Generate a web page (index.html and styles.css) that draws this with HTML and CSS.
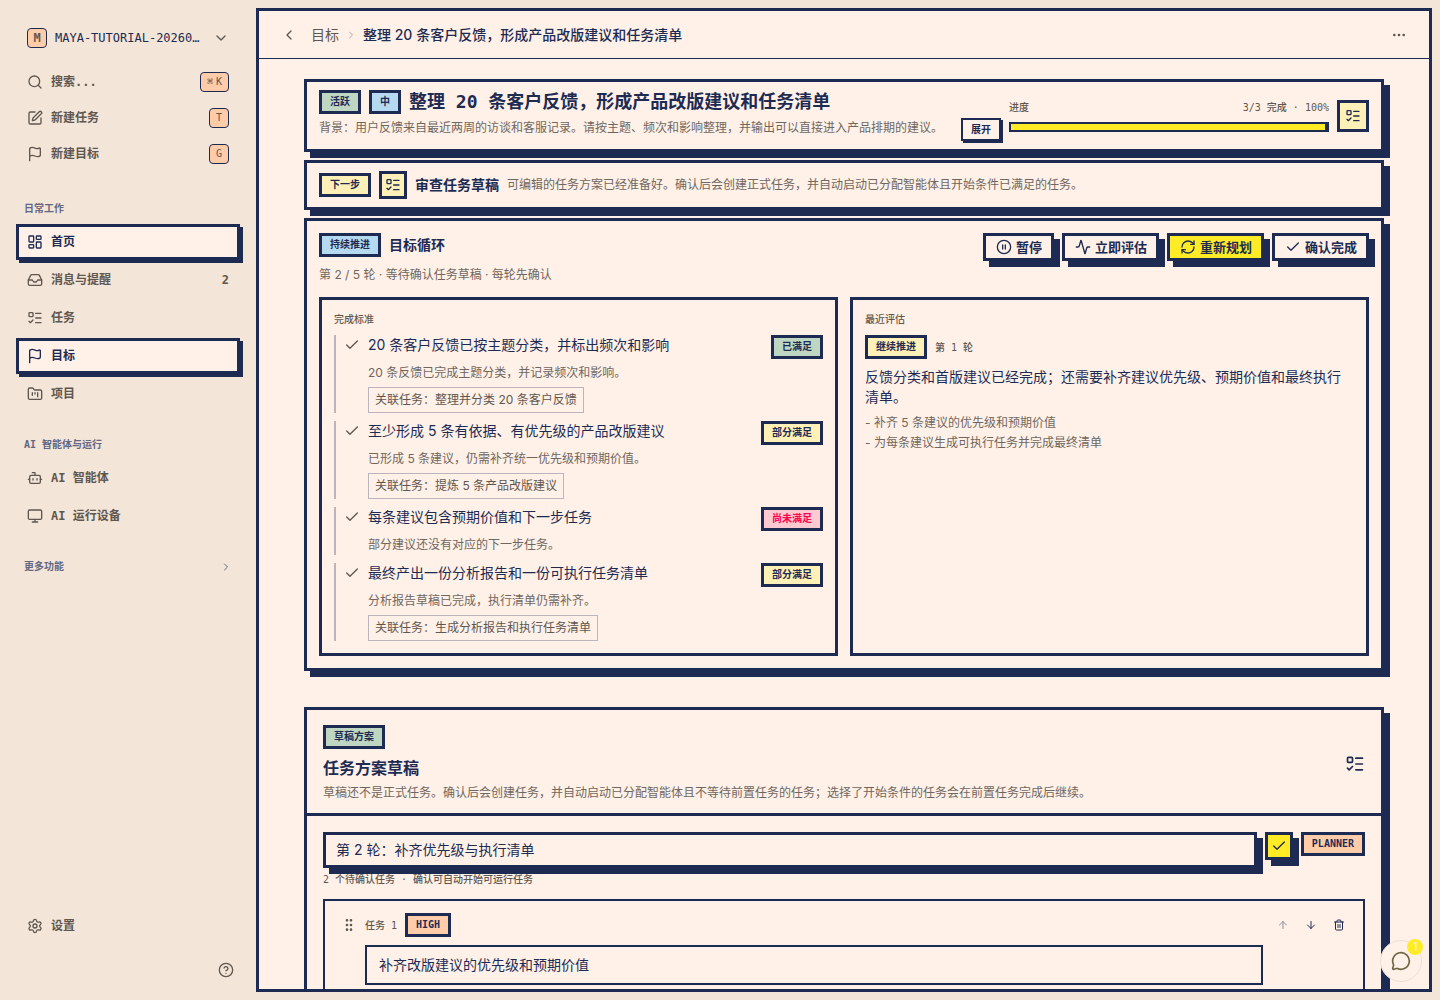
FILE: index.html
```html
<!DOCTYPE html>
<html lang="zh-CN">
<head>
<meta charset="utf-8">
<meta name="viewport" content="width=device-width, initial-scale=1">
<title>目标</title>
<link rel="stylesheet" href="styles.css">
</head>
<body>
<svg class="sprite" aria-hidden="true">
  <symbol id="chevron-down" viewBox="0 0 24 24"><path d="m6 9 6 6 6-6"/></symbol>
  <symbol id="chevron-right" viewBox="0 0 24 24"><path d="m9 18 6-6-6-6"/></symbol>
  <symbol id="chevron-left" viewBox="0 0 24 24"><path d="m15 18-6-6 6-6"/></symbol>
  <symbol id="search" viewBox="0 0 24 24"><circle cx="11" cy="11" r="8"/><path d="m21 21-4.34-4.34"/></symbol>
  <symbol id="pen" viewBox="0 0 24 24"><path d="M12 3H5a2 2 0 0 0-2 2v14a2 2 0 0 0 2 2h14a2 2 0 0 0 2-2v-7"/><path d="M18.375 2.625a1 1 0 0 1 3 3l-9.013 9.014a2 2 0 0 1-.853.505l-2.873.84a.5.5 0 0 1-.62-.62l.84-2.873a2 2 0 0 1 .506-.852z"/></symbol>
  <symbol id="flag" viewBox="0 0 24 24"><path d="M4 22V4a1 1 0 0 1 .4-.8A6 6 0 0 1 8 2c3 0 5 2 7.333 2q2 0 3.067-.8A1 1 0 0 1 20 4v10a1 1 0 0 1-.4.8A6 6 0 0 1 16 16c-3 0-5-2-8-2a6 6 0 0 0-4 1.528"/></symbol>
  <symbol id="dashboard" viewBox="0 0 24 24"><rect x="3" y="3" width="7" height="9" rx="1"/><rect x="14" y="3" width="7" height="5" rx="1"/><rect x="14" y="12" width="7" height="9" rx="1"/><rect x="3" y="16" width="7" height="5" rx="1"/></symbol>
  <symbol id="inbox" viewBox="0 0 24 24"><path d="M22 12h-6l-2 3h-4l-2-3H2"/><path d="M5.45 5.11 2 12v6a2 2 0 0 0 2 2h16a2 2 0 0 0 2-2v-6l-3.45-6.89A2 2 0 0 0 16.76 4H7.24a2 2 0 0 0-1.79 1.11z"/></symbol>
  <symbol id="todo" viewBox="0 0 24 24"><rect x="3" y="4" width="6" height="6" rx="1"/><path d="m3 17 2 2 4-4M13 5h8M13 12h8M13 19h8"/></symbol>
  <symbol id="kanban" viewBox="0 0 24 24"><path d="M4 20h16a2 2 0 0 0 2-2V8a2 2 0 0 0-2-2h-7.93a2 2 0 0 1-1.66-.9l-.82-1.2A2 2 0 0 0 7.93 3H4a2 2 0 0 0-2 2v13c0 1.1.9 2 2 2Z"/><path d="M8 10v4M12 10v2M16 10v6"/></symbol>
  <symbol id="bot" viewBox="0 0 24 24"><path d="M12 8V4H8"/><rect x="4" y="8" width="16" height="12" rx="2"/><path d="M2 14h2M20 14h2M15 13v2M9 13v2"/></symbol>
  <symbol id="monitor" viewBox="0 0 24 24"><rect x="2" y="3" width="20" height="14" rx="2"/><path d="M8 21h8M12 17v4"/></symbol>
  <symbol id="gear" viewBox="0 0 24 24"><path d="M9.671 4.136a2.34 2.34 0 0 1 4.659 0 2.34 2.34 0 0 0 3.319 1.915 2.34 2.34 0 0 1 2.33 4.033 2.34 2.34 0 0 0 0 3.831 2.34 2.34 0 0 1-2.33 4.033 2.34 2.34 0 0 0-3.319 1.915 2.34 2.34 0 0 1-4.659 0 2.34 2.34 0 0 0-3.32-1.915 2.34 2.34 0 0 1-2.33-4.033 2.34 2.34 0 0 0 0-3.831A2.34 2.34 0 0 1 6.35 6.051a2.34 2.34 0 0 0 3.319-1.915"/><circle cx="12" cy="12" r="3"/></symbol>
  <symbol id="help" viewBox="0 0 24 24"><circle cx="12" cy="12" r="10"/><path d="M9.09 9a3 3 0 0 1 5.83 1c0 2-3 3-3 3M12 17h.01"/></symbol>
  <symbol id="more" viewBox="0 0 24 24"><circle cx="12" cy="12" r="1"/><circle cx="19" cy="12" r="1"/><circle cx="5" cy="12" r="1"/></symbol>
  <symbol id="pause" viewBox="0 0 24 24"><circle cx="12" cy="12" r="10"/><path d="M10 15V9M14 15V9"/></symbol>
  <symbol id="activity" viewBox="0 0 24 24"><path d="M22 12h-2.48a2 2 0 0 0-1.93 1.46l-2.35 8.36a.25.25 0 0 1-.48 0L9.24 2.18a.25.25 0 0 0-.48 0l-2.35 8.36A2 2 0 0 1 4.49 12H2"/></symbol>
  <symbol id="refresh" viewBox="0 0 24 24"><path d="M3 12a9 9 0 0 1 9-9 9.75 9.75 0 0 1 6.74 2.74L21 8"/><path d="M21 3v5h-5M21 12a9 9 0 0 1-9 9 9.75 9.75 0 0 1-6.74-2.74L3 16"/><path d="M8 16H3v5"/></symbol>
  <symbol id="check" viewBox="0 0 24 24"><path d="M20 6 9 17l-5-5"/></symbol>
  <symbol id="grip" viewBox="0 0 24 24"><circle cx="9" cy="12" r="1"/><circle cx="9" cy="5" r="1"/><circle cx="9" cy="19" r="1"/><circle cx="15" cy="12" r="1"/><circle cx="15" cy="5" r="1"/><circle cx="15" cy="19" r="1"/></symbol>
  <symbol id="up" viewBox="0 0 24 24"><path d="m5 12 7-7 7 7M12 19V5"/></symbol>
  <symbol id="down" viewBox="0 0 24 24"><path d="M12 5v14M19 12l-7 7-7-7"/></symbol>
  <symbol id="trash" viewBox="0 0 24 24"><path d="M10 11v6M14 11v6M19 6v14a2 2 0 0 1-2 2H7a2 2 0 0 1-2-2V6M3 6h18M8 6V4a2 2 0 0 1 2-2h4a2 2 0 0 1 2 2v2"/></symbol>
  <symbol id="chat" viewBox="0 0 24 24"><path d="M2.992 16.342a2 2 0 0 1 .094 1.167l-1.065 3.29a1 1 0 0 0 1.236 1.168l3.413-.998a2 2 0 0 1 1.099.092 10 10 0 1 0-4.777-4.719"/></symbol>
</svg>

<div class="app">
  <aside class="sidebar">
    <button class="workspace" type="button">
      <span class="avatar">M</span>
      <span class="workspace-name">MAYA-TUTORIAL-20260…</span>
      <svg class="icon"><use href="#chevron-down"/></svg>
    </button>
    <div class="quick">
      <button class="item" type="button"><svg class="icon"><use href="#search"/></svg><span class="item-label">搜索...</span><kbd><span>⌘</span><span>K</span></kbd></button>
      <button class="item" type="button"><svg class="icon"><use href="#pen"/></svg><span class="item-label">新建任务</span><kbd>T</kbd></button>
      <button class="item" type="button"><svg class="icon"><use href="#flag"/></svg><span class="item-label">新建目标</span><kbd>G</kbd></button>
    </div>
    <nav class="nav">
      <section class="group">
        <h2 class="group-title">日常工作</h2>
        <a class="item active" href="#"><svg class="icon"><use href="#dashboard"/></svg><span class="item-label">首页</span></a>
        <a class="item" href="#"><svg class="icon"><use href="#inbox"/></svg><span class="item-label">消息与提醒</span><span>2</span></a>
        <a class="item" href="#"><svg class="icon"><use href="#todo"/></svg><span class="item-label">任务</span></a>
        <a class="item active" href="#"><svg class="icon"><use href="#flag"/></svg><span class="item-label">目标</span></a>
        <a class="item" href="#"><svg class="icon"><use href="#kanban"/></svg><span class="item-label">项目</span></a>
      </section>
      <section class="group">
        <h2 class="group-title">AI 智能体与运行</h2>
        <a class="item" href="#"><svg class="icon"><use href="#bot"/></svg><span class="item-label">AI 智能体</span></a>
        <a class="item" href="#"><svg class="icon"><use href="#monitor"/></svg><span class="item-label">AI 运行设备</span></a>
      </section>
      <button class="group-title more-toggle" type="button">更多功能<svg class="icon icon-12"><use href="#chevron-right"/></svg></button>
    </nav>
    <a class="item" href="#"><svg class="icon"><use href="#gear"/></svg><span class="item-label">设置</span></a>
    <button class="icon-button help" type="button" aria-label="帮助"><svg class="icon"><use href="#help"/></svg></button>
  </aside>

  <main class="main">
    <header class="topbar">
      <button class="icon-button" type="button" aria-label="返回"><svg class="icon"><use href="#chevron-left"/></svg></button>
      <nav class="crumbs">
        <a href="#">目标</a>
        <svg class="icon icon-12"><use href="#chevron-right"/></svg>
        <span class="crumb-current">整理 20 条客户反馈，形成产品改版建议和任务清单</span>
      </nav>
      <button class="icon-button" type="button" aria-label="更多"><svg class="icon"><use href="#more"/></svg></button>
    </header>

    <div class="scroll">
      <div class="page">
        <section class="card summary">
          <div class="summary-text">
            <div class="row">
              <span class="badge green">活跃</span>
              <span class="badge blue">中</span>
              <h1 class="page-title">整理 20 条客户反馈，形成产品改版建议和任务清单</h1>
            </div>
            <div class="summary-desc">
              <p class="note">背景：用户反馈来自最近两周的访谈和客服记录。请按主题、频次和影响整理，并输出可以直接进入产品排期的建议。</p>
              <button class="expand" type="button">展开</button>
            </div>
          </div>
          <div class="progress">
            <div class="progress-head"><span>进度</span><span>3/3 完成 · 100%</span></div>
            <div class="bar"><div class="bar-fill" style="width:100%"></div></div>
          </div>
          <span class="icon-box icon-box-32"><svg class="icon"><use href="#todo"/></svg></span>
        </section>

        <section class="card next row">
          <span class="badge yellow">下一步</span>
          <span class="icon-box"><svg class="icon"><use href="#todo"/></svg></span>
          <h2 class="card-title">审查任务草稿</h2>
          <p class="note">可编辑的任务方案已经准备好。确认后会创建正式任务，并自动启动已分配智能体且开始条件已满足的任务。</p>
        </section>

        <section class="card loop">
          <div class="loop-head">
            <div class="row">
              <span class="badge blue">持续推进</span>
              <h2 class="card-title">目标循环</h2>
            </div>
            <div class="row">
              <button class="action" type="button"><svg class="icon"><use href="#pause"/></svg>暂停</button>
              <button class="action" type="button"><svg class="icon"><use href="#activity"/></svg>立即评估</button>
              <button class="action primary" type="button"><svg class="icon"><use href="#refresh"/></svg>重新规划</button>
              <button class="action" type="button"><svg class="icon"><use href="#check"/></svg>确认完成</button>
            </div>
          </div>
          <p class="note loop-note">第 2 / 5 轮 · 等待确认任务草稿 · 每轮先确认</p>
          <div class="panels">
            <section class="panel">
              <h3 class="label">完成标准</h3>
              <ul class="criteria">
                <li class="criterion">
                  <svg class="icon"><use href="#check"/></svg>
                  <div class="criterion-body">
                    <div class="criterion-head"><span class="text">20 条客户反馈已按主题分类，并标出频次和影响</span><span class="badge green">已满足</span></div>
                    <p class="note">20 条反馈已完成主题分类，并记录频次和影响。</p>
                    <a class="chip" href="#">关联任务：整理并分类 20 条客户反馈</a>
                  </div>
                </li>
                <li class="criterion">
                  <svg class="icon"><use href="#check"/></svg>
                  <div class="criterion-body">
                    <div class="criterion-head"><span class="text">至少形成 5 条有依据、有优先级的产品改版建议</span><span class="badge yellow">部分满足</span></div>
                    <p class="note">已形成 5 条建议，仍需补齐统一优先级和预期价值。</p>
                    <a class="chip" href="#">关联任务：提炼 5 条产品改版建议</a>
                  </div>
                </li>
                <li class="criterion">
                  <svg class="icon"><use href="#check"/></svg>
                  <div class="criterion-body">
                    <div class="criterion-head"><span class="text">每条建议包含预期价值和下一步任务</span><span class="badge red">尚未满足</span></div>
                    <p class="note">部分建议还没有对应的下一步任务。</p>
                  </div>
                </li>
                <li class="criterion">
                  <svg class="icon"><use href="#check"/></svg>
                  <div class="criterion-body">
                    <div class="criterion-head"><span class="text">最终产出一份分析报告和一份可执行任务清单</span><span class="badge yellow">部分满足</span></div>
                    <p class="note">分析报告草稿已完成，执行清单仍需补齐。</p>
                    <a class="chip" href="#">关联任务：生成分析报告和执行任务清单</a>
                  </div>
                </li>
              </ul>
            </section>
            <section class="panel">
              <h3 class="label">最近评估</h3>
              <div class="row"><span class="badge yellow">继续推进</span><span class="label">第 1 轮</span></div>
              <p class="text">反馈分类和首版建议已经完成；还需要补齐建议优先级、预期价值和最终执行清单。</p>
              <ul class="note gaps">
                <li>- 补齐 5 条建议的优先级和预期价值</li>
                <li>- 为每条建议生成可执行任务并完成最终清单</li>
              </ul>
            </section>
          </div>
        </section>

        <section class="card draft">
          <header class="draft-head">
            <div>
              <span class="badge green">草稿方案</span>
              <h2 class="draft-title">任务方案草稿</h2>
              <p class="note">草稿还不是正式任务。确认后会创建任务，并自动启动已分配智能体且不等待前置任务的任务；选择了开始条件的任务会在前置任务完成后继续。</p>
            </div>
            <svg class="icon icon-20"><use href="#todo"/></svg>
          </header>
          <div class="draft-body">
            <div class="plan-row">
              <input class="plan-input" type="text" aria-label="方案标题" value="第 2 轮：补齐优先级与执行清单">
              <button class="action primary square" type="button" aria-label="确认"><svg class="icon"><use href="#check"/></svg></button>
              <span class="badge peach">PLANNER</span>
            </div>
            <p class="label plan-meta">2 个待确认任务 · 确认可自动开始可运行任务</p>
            <article class="task">
              <button class="icon-button grip" type="button" aria-label="拖动"><svg class="icon"><use href="#grip"/></svg></button>
              <div class="task-body">
                <div class="row"><span class="label">任务 1</span><span class="badge peach">HIGH</span></div>
                <input class="task-input" type="text" aria-label="任务标题" value="补齐改版建议的优先级和预期价值">
                <textarea class="task-input task-area" aria-label="任务说明"></textarea>
              </div>
              <div class="task-actions">
                <button class="icon-button" type="button" disabled aria-label="上移"><svg class="icon icon-12"><use href="#up"/></svg></button>
                <button class="icon-button" type="button" aria-label="下移"><svg class="icon icon-12"><use href="#down"/></svg></button>
                <button class="icon-button" type="button" aria-label="删除"><svg class="icon icon-12"><use href="#trash"/></svg></button>
              </div>
            </article>
          </div>
        </section>
      </div>
    </div>
  </main>
</div>

<button class="chat" type="button" aria-label="聊天"><svg class="icon icon-20"><use href="#chat"/></svg><span class="chat-count">1</span></button>
</body>
</html>
```
FILE: styles.css
```css
:root {
  --paper: #fff1e8;
  --desk: #f3e5d8;
  --navy: #1d2b53;
  --brown: #5f574f;
  --yellow: #ffec27;
  --peach: #ffccaa;
  --sans: Inter, "Noto Sans CJK SC", sans-serif;
  --mono: "DejaVu Sans Mono", "Noto Sans CJK SC", monospace;
}

* { box-sizing: border-box; }

body, h1, h2, h3, p, ul { margin: 0; padding: 0; }

body {
  background: var(--desk);
  color: var(--navy);
  font: 14px/20px var(--sans);
}

ul { list-style: none; }
a { color: inherit; text-decoration: none; }

button {
  margin: 0;
  padding: 0;
  border: 0;
  background: none;
  color: inherit;
  font: inherit;
  cursor: pointer;
}

.sprite { display: none; }

.icon {
  width: 16px;
  height: 16px;
  flex: none;
  fill: none;
  stroke: currentColor;
  stroke-width: 2;
  stroke-linecap: round;
  stroke-linejoin: round;
}
.icon-12 { width: 12px; height: 12px; }
.icon-20 { width: 20px; height: 20px; }

.icon-button {
  display: flex;
  align-items: center;
  justify-content: center;
  width: 28px;
  height: 28px;
  flex: none;
}

.row { display: flex; align-items: center; gap: 8px; }

.app { display: flex; height: 100vh; }

/* Sidebar */
.sidebar {
  display: flex;
  flex-direction: column;
  width: 256px;
  flex: none;
  padding: 20px 16px 16px;
  color: var(--brown);
  font: 600 12px/16px var(--mono);
}

.workspace {
  display: flex;
  align-items: center;
  gap: 8px;
  height: 36px;
  padding: 0 11px;
  text-align: left;
}
.workspace-name {
  flex: 1;
  color: var(--navy);
  font-weight: 400;
  white-space: nowrap;
}

.avatar, kbd {
  display: flex;
  align-items: center;
  justify-content: center;
  gap: 3px;
  min-width: 20px;
  height: 20px;
  border: 1px solid var(--navy);
  border-radius: 4px;
  background: var(--peach);
}
kbd { padding: 0 6px; font: 400 10px/16px var(--mono); }

.quick { margin: 8px 0 28px; }

.item {
  display: flex;
  align-items: center;
  gap: 8px;
  width: 100%;
  height: 36px;
  padding: 0 8px;
  border: 3px solid transparent;
  text-align: left;
}
.item-label { flex: 1; }
.item.active {
  border-color: var(--navy);
  background: var(--paper);
  box-shadow: 3px 3px 0 var(--navy);
  color: var(--navy);
}

.nav { display: flex; flex-direction: column; gap: 24px; flex: 1; }
.group { display: flex; flex-direction: column; gap: 2px; }
.group-title {
  padding: 0 8px;
  color: #636783;
  font: 600 10px/18px var(--mono);
}
.group > .group-title { margin-bottom: 4px; }
.more-toggle { display: flex; align-items: center; justify-content: space-between; }
.help { align-self: flex-end; margin: 12px 0 0; }

/* Main frame */
.main {
  display: flex;
  flex-direction: column;
  flex: 1;
  min-width: 0;
  margin: 8px 8px 8px 0;
  border: 3px solid var(--navy);
  background: var(--paper);
}

.topbar {
  display: flex;
  align-items: center;
  gap: 8px;
  height: 48px;
  flex: none;
  padding: 0 16px;
  border-bottom: 1px solid var(--navy);
  color: var(--brown);
}
.crumbs { display: flex; align-items: center; gap: 6px; flex: 1; }
.crumbs .icon { opacity: .5; }
.crumb-current { color: var(--navy); font-weight: 500; }

.scroll { flex: 1; min-height: 0; overflow: hidden; }
.page {
  display: flex;
  flex-direction: column;
  gap: 8px;
  max-width: 1080px;
  margin: 0 auto;
  padding: 20px 0;
}

.card {
  border: 3px solid var(--navy);
  background: var(--paper);
  box-shadow: 6px 6px 0 var(--navy);
}

.badge {
  display: inline-block;
  flex: none;
  height: 24px;
  padding: 0 8px;
  border: 3px solid var(--navy);
  font: 600 10px/18px var(--mono);
  white-space: nowrap;
}
.green { background: #bfd7c2; }
.blue { background: #b4d9f0; }
.yellow { background: #fff0b8; }
.red { background: #ffc9d1; color: #ff004d; }
.peach { background: var(--peach); }

.note { color: #6f675f; font-size: 12px; line-height: 20px; }
.label { color: var(--brown); font: 500 10px/15px var(--mono); }
.card-title { font-size: 14px; line-height: 20px; font-weight: 600; }

.icon-box {
  display: flex;
  align-items: center;
  justify-content: center;
  width: 28px;
  height: 28px;
  flex: none;
  border: 3px solid var(--navy);
  background: #fff0b8;
}
.icon-box-32 { width: 32px; height: 32px; }

/* Summary */
.summary { display: flex; align-items: center; gap: 8px; padding: 8px 12px; }
.summary-text { flex: 1; min-width: 0; }
.page-title { font: 600 18px/24px var(--mono); }
.summary-desc { display: flex; align-items: flex-start; gap: 8px; margin-top: 4px; }
.summary-desc .note { flex: 1; }
.expand {
  padding: 0 8px;
  border: 2px solid var(--navy);
  box-shadow: 2px 2px 0 var(--navy);
  font: 600 10px/19px var(--mono);
}
.progress { width: 320px; flex: none; }
.progress-head {
  display: flex;
  justify-content: space-between;
  margin-bottom: 6px;
  color: var(--brown);
  font: 500 10px/16px var(--mono);
}
.bar { height: 10px; border: 2px solid var(--navy); }
.bar-fill { height: 100%; border-right: 2px solid var(--navy); background: var(--yellow); }

.next { padding: 8px 12px; }

/* Goal loop */
.loop { padding: 12px; }
.loop-head { display: flex; align-items: flex-start; justify-content: space-between; }
.loop-note { margin: 4px 0 12px; }

.action {
  display: flex;
  align-items: center;
  gap: 4px;
  height: 28px;
  padding: 0 9px 0 10px;
  border: 3px solid var(--navy);
  background: var(--paper);
  box-shadow: 6px 6px 0 var(--navy);
  font-size: 13px;
  font-weight: 600;
}
.primary { background: var(--yellow); }
.square { justify-content: center; width: 28px; padding: 0; flex: none; }

.panels { display: grid; grid-template-columns: 1fr 1fr; gap: 12px; }
.panel {
  display: flex;
  flex-direction: column;
  gap: 8px;
  padding: 12px;
  border: 3px solid var(--navy);
}
.criteria { display: flex; flex-direction: column; gap: 8px; }
.criterion {
  display: flex;
  gap: 8px;
  padding-left: 8px;
  border-left: 2px solid #bbb5bd;
  color: var(--brown);
}
.criterion > .icon { margin-top: 2px; }
.criterion-body {
  display: flex;
  flex-direction: column;
  align-items: flex-start;
  gap: 4px;
  flex: 1;
}
.criterion-head {
  display: flex;
  align-items: flex-start;
  justify-content: space-between;
  gap: 8px;
  width: 100%;
  color: var(--navy);
}
.chip {
  padding: 2px 6px;
  border: 1px solid #bbb5bd;
  color: var(--brown);
  font-size: 12px;
}
.gaps { margin-top: -2px; }

/* Draft plan */
.draft { margin-top: 28px; }
.draft-head {
  display: flex;
  align-items: center;
  justify-content: space-between;
  padding: 15px 16px 10px;
  border-bottom: 3px solid var(--navy);
}
.draft-head .badge { display: block; width: fit-content; }
.draft-title { margin: 8px 0 4px; font-size: 16px; line-height: 22px; font-weight: 600; }
.draft-body { padding: 16px; }
.plan-row { display: flex; align-items: flex-start; gap: 8px; }

input, textarea {
  display: block;
  margin: 0;
  outline: 0;
  border-radius: 0;
  background: var(--paper);
  color: var(--navy);
  font: 14px/20px var(--sans);
}
.plan-input {
  flex: 1;
  min-width: 0;
  height: 36px;
  padding: 0 10px 2px;
  border: 3px solid var(--navy);
  box-shadow: 6px 6px 0 var(--navy);
}
.plan-meta { position: relative; margin: 4px 0 12px; }

.task {
  display: flex;
  align-items: flex-start;
  padding: 12px;
  border: 2px solid var(--navy);
}
.task .icon-button { width: 24px; height: 24px; }
.grip { margin-right: 4px; color: var(--brown); }
.task-body { flex: 1; margin-right: 8px; }
.task-input {
  width: 100%;
  height: 40px;
  margin-top: 8px;
  padding: 0 12px 2px;
  border: 2px solid var(--navy);
}
.task-area { height: 80px; resize: none; }
.task-actions { display: flex; gap: 4px; }
.task-actions :disabled { opacity: .5; }

/* Floating chat launcher */
.chat {
  position: fixed;
  right: 18px;
  bottom: 18px;
  display: flex;
  align-items: center;
  justify-content: center;
  width: 42px;
  height: 42px;
  border: 1px solid #eadfd6;
  border-radius: 50%;
  background: var(--paper);
  color: #6f6545;
}
.chat-count {
  position: absolute;
  top: -2px;
  right: -2px;
  width: 16px;
  height: 16px;
  border-radius: 50%;
  background: var(--yellow);
  color: var(--paper);
  font-size: 12px;
  line-height: 16px;
}
```
